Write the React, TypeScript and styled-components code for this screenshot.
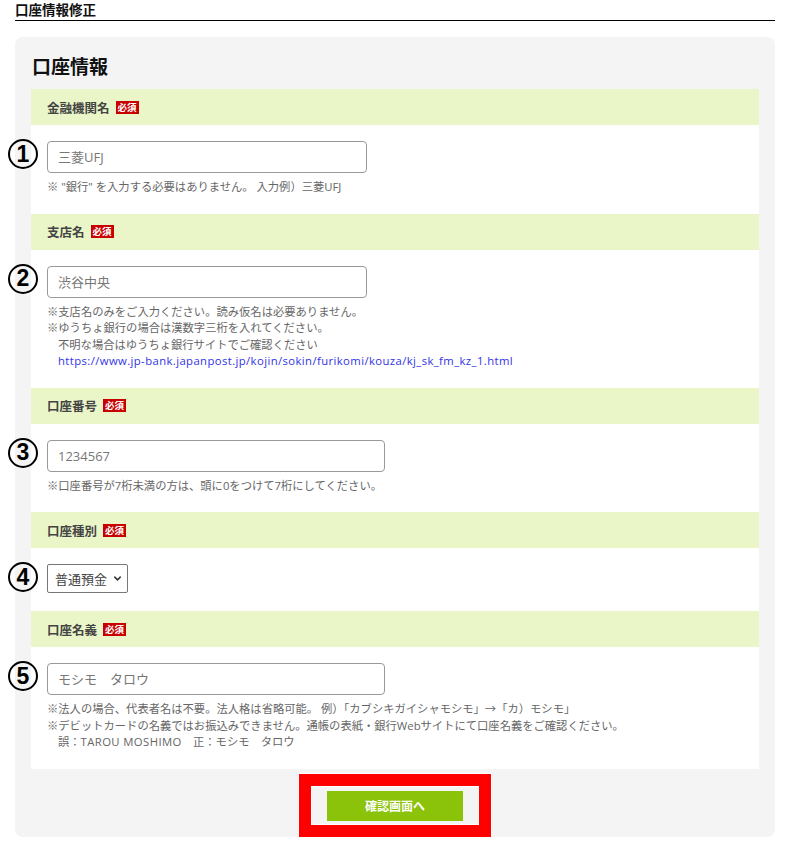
import React from 'react'
import styled, { createGlobalStyle } from 'styled-components'
import { ChevronDown } from 'lucide-react'

const FONT = `"Open Sans", "Noto Sans CJK JP", sans-serif`

const GlobalStyle = createGlobalStyle`
  body {
    margin: 0;
    background: #fff;
    font-family: ${FONT};
    color: #333;
  }
`

type Field = {
  no: number
  label: string
  kind: 'input' | 'select'
  placeholder?: string
  width?: number
  notes?: React.ReactNode[]
}

const LINK = 'https://www.jp-bank.japanpost.jp/kojin/sokin/furikomi/kouza/kj_sk_fm_kz_1.html'

// built at render time so the styled parts below are already defined
function getFields(): Field[] {
  return [
    {
      no: 1,
      label: '金融機関名',
      kind: 'input',
      placeholder: '三菱UFJ',
      width: 320,
      notes: ['※ "銀行" を入力する必要はありません。 入力例）三菱UFJ'],
    },
    {
      no: 2,
      label: '支店名',
      kind: 'input',
      placeholder: '渋谷中央',
      width: 320,
      notes: [
        '※支店名のみをご入力ください。読み仮名は必要ありません。',
        '※ゆうちょ銀行の場合は漢数字三桁を入れてください。',
        <Indent key="a">不明な場合はゆうちょ銀行サイトでご確認ください</Indent>,
        <Indent key="b"><Link href={LINK}>{LINK}</Link></Indent>,
      ],
    },
    {
      no: 3,
      label: '口座番号',
      kind: 'input',
      placeholder: '1234567',
      width: 338,
      notes: ['※口座番号が7桁未満の方は、頭に0をつけて7桁にしてください。'],
    },
    { no: 4, label: '口座種別', kind: 'select' },
    {
      no: 5,
      label: '口座名義',
      kind: 'input',
      placeholder: 'モシモ　タロウ',
      width: 338,
      notes: [
        '※法人の場合、代表者名は不要。法人格は省略可能。 例）「カブシキガイシャモシモ」→「カ）モシモ」',
        '※デビットカードの名義ではお振込みできません。通帳の表紙・銀行Webサイトにて口座名義をご確認ください。',
        <Indent key="c">誤：<Latin>TAROU MOSHIMO</Latin>　正：モシモ　タロウ</Indent>,
      ],
    },
  ]
}

function App() {
  const fields = getFields()
  return (
    <Page>
      <GlobalStyle />
      <PageTitle>口座情報修正</PageTitle>
      <Panel>
        <Heading>口座情報</Heading>
        {fields.map((f) => (
          <Section key={f.no}>
            <SectionHead>
              {f.label}
              <Required>必須</Required>
            </SectionHead>
            <SectionBody>
              <Control>
                <Marker>{f.no}</Marker>
                {f.kind === 'input' ? (
                  <TextInput $width={f.width ?? 320} placeholder={f.placeholder} />
                ) : (
                  <SelectWrap>
                    <Select defaultValue="futsu">
                      <option value="futsu">普通預金</option>
                      <option value="toza">当座預金</option>
                    </Select>
                    <Chevron>
                      <ChevronDown size={11} strokeWidth={3.2} color="#333" />
                    </Chevron>
                  </SelectWrap>
                )}
              </Control>
              {f.notes && (
                <Notes>
                  {f.notes.map((n, i) => (
                    <div key={i}>{n}</div>
                  ))}
                </Notes>
              )}
            </SectionBody>
          </Section>
        ))}
        <Footer>
          <Highlight>
            <HighlightInner>
              <SubmitButton type="button">確認画面へ</SubmitButton>
            </HighlightInner>
          </Highlight>
        </Footer>
      </Panel>
    </Page>
  )
}

const Page = styled.div`
  width: 760px;
  padding-left: 15px;
`

const PageTitle = styled.h1`
  margin: 0;
  font-size: 13.5px;
  line-height: 20px;
  font-weight: bold;
  color: #111;
  border-bottom: 1px solid #000;
`

const Panel = styled.div`
  margin-top: 16px;
  background: #f4f4f4;
  border-radius: 8px;
  padding: 16px 16px 0;
`

const Heading = styled.h2`
  margin: 0 0 8px;
  font-size: 19px;
  line-height: 28px;
  font-weight: bold;
  color: #111;
  padding-left: 1px;
`

const Section = styled.section`
  background: #fff;
`

const SectionHead = styled.div`
  height: 36px;
  display: flex;
  align-items: center;
  gap: 6px;
  padding-left: 16px;
  background: #eaf6c8;
  font-size: 12.5px;
  font-weight: bold;
  color: #444;
`

const Required = styled.span`
  display: inline-block;
  background: #c80000;
  color: #fff;
  font-size: 9.5px;
  font-weight: bold;
  line-height: 13px;
  padding: 0 2px;
`

const SectionBody = styled.div`
  padding: 16px 16px 18px;
`

const Control = styled.div`
  position: relative;
  display: flex;
`

const Marker = styled.span`
  position: absolute;
  left: -39px;
  top: -2px;
  width: 30px;
  height: 30px;
  box-sizing: border-box;
  border: 2.5px solid #000;
  border-radius: 50%;
  display: flex;
  align-items: center;
  justify-content: center;
  font-family: "Liberation Sans", Arial, sans-serif;
  font-size: 23px;
  font-weight: bold;
  color: #000;
  line-height: 1;
`

const TextInput = styled.input<{ $width: number }>`
  box-sizing: border-box;
  width: ${(p) => p.$width}px;
  height: 32px;
  padding: 0 10px;
  border: 1px solid #999;
  border-radius: 4px;
  font-family: ${FONT};
  font-size: 13px;
  color: #333;
  outline: none;

  &::placeholder {
    color: #777;
  }
`

const SelectWrap = styled.div`
  position: relative;
  display: inline-block;
`

const Select = styled.select`
  box-sizing: border-box;
  width: 81px;
  height: 29px;
  padding: 0 20px 0 7px;
  border: 1px solid #777;
  border-radius: 2px;
  background: #fff;
  appearance: none;
  font-family: ${FONT};
  font-size: 13px;
  color: #444;
`

const Chevron = styled.span`
  position: absolute;
  right: 5px;
  top: 9px;
  display: flex;
  pointer-events: none;
`

const Notes = styled.div`
  margin-top: 6px;
  font-size: 11.3px;
  line-height: 16.5px;
  color: #666;
  white-space: nowrap;
`

const Indent = styled.span`
  padding-left: 11px;
`

const Latin = styled.span`
  letter-spacing: 0.4px;
`

const Link = styled.a`
  color: #3232e6;
  text-decoration: none;
  letter-spacing: 0.4px;
`

const Footer = styled.div`
  display: flex;
  justify-content: center;
  padding-top: 5px;
`

const Highlight = styled.div`
  border: 12px solid #ff0000;
  box-shadow: 0 0 0 1px #fff;
`

const HighlightInner = styled.div`
  border: 1px solid #fff;
  padding: 4px 15px 3px;
  background: #f4f4f4;
`

const SubmitButton = styled.button`
  display: block;
  width: 136px;
  height: 30px;
  border: none;
  background: #8bc20a;
  color: #fff;
  font-family: ${FONT};
  font-size: 12px;
  font-weight: bold;
  cursor: pointer;
`

export default App
